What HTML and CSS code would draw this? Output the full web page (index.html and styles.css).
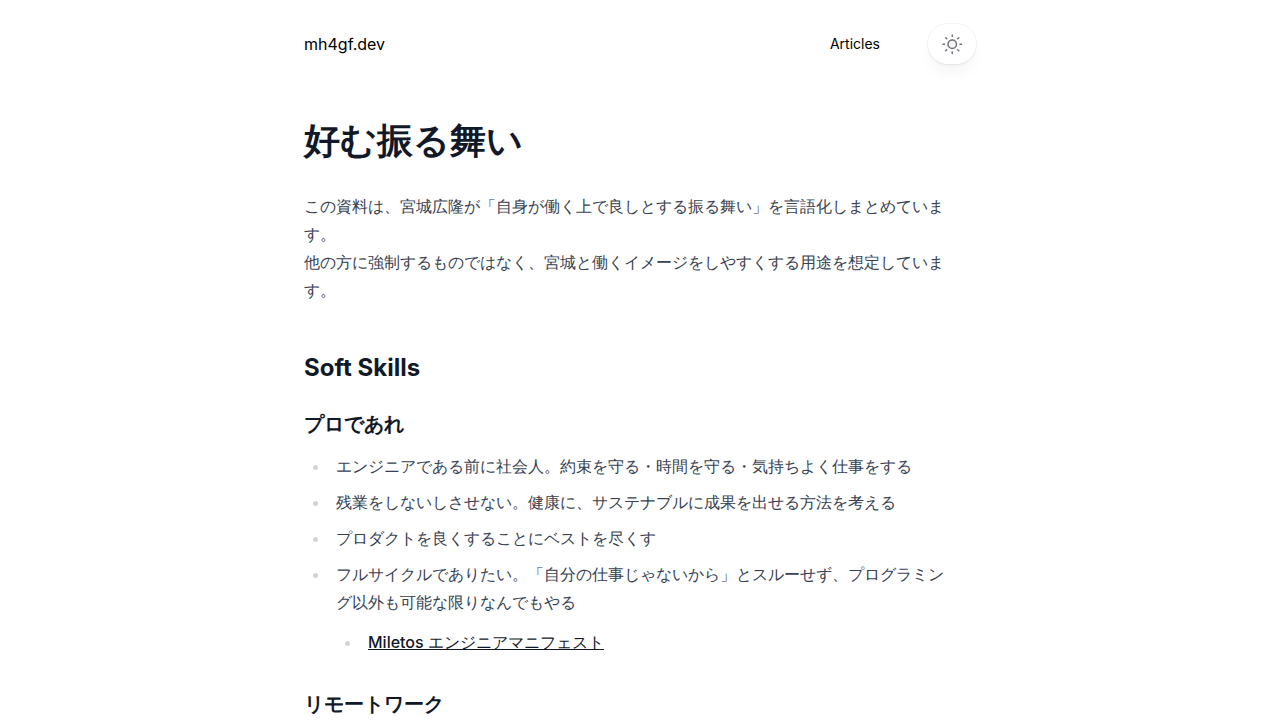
FILE: index.html
```html
<!DOCTYPE html>
<html lang="ja">
<head>
<meta charset="utf-8">
<meta name="viewport" content="width=device-width, initial-scale=1">
<title>好む振る舞い - mh4gf.dev</title>
<link rel="stylesheet" href="styles.css">
</head>
<body>
<div class="container">
  <header class="header">
    <a class="brand" href="#">mh4gf.dev</a>
    <nav class="nav">
      <a class="nav-link" href="#">Articles</a>
      <button class="theme-toggle" type="button" aria-label="Toggle dark mode">
        <svg class="icon" viewBox="0 0 24 24" fill="none" stroke="currentColor" stroke-width="1.5" stroke-linecap="round" stroke-linejoin="round" aria-hidden="true">
          <path class="icon-core" d="M8 12.25A4.25 4.25 0 0 1 12.25 8a4.25 4.25 0 0 1 4.25 4.25 4.25 4.25 0 0 1-4.25 4.25A4.25 4.25 0 0 1 8 12.25Z"/>
          <path d="M12.25 3v1.5M21.5 12.25H20M18.791 18.791l-1.06-1.06M18.791 5.709l-1.06 1.06M12.25 20v1.5M4.5 12.25H3M6.77 6.77 5.709 5.709M6.77 17.73l-1.061 1.061"/>
        </svg>
      </button>
    </nav>
  </header>
  <main>
    <article class="prose">
      <h1>好む振る舞い</h1>
      <p>この資料は、宮城広隆が「自身が働く上で良しとする振る舞い」を言語化しまとめています。<br>他の方に強制するものではなく、宮城と働くイメージをしやすくする用途を想定しています。</p>
      <h2>Soft Skills</h2>
      <h3>プロであれ</h3>
      <ul>
        <li>エンジニアである前に社会人。約束を守る・時間を守る・気持ちよく仕事をする</li>
        <li>残業をしないしさせない。健康に、サステナブルに成果を出せる方法を考える</li>
        <li>プロダクトを良くすることにベストを尽くす</li>
        <li>フルサイクルでありたい。「自分の仕事じゃないから」とスルーせず、プログラミング以外も可能な限りなんでもやる
          <ul>
            <li><a href="#">Miletos エンジニアマニフェスト</a></li>
          </ul>
        </li>
      </ul>
      <h3>リモートワーク</h3>
    </article>
  </main>
</div>
</body>
</html>
```

FILE: styles.css
```css
* {
  box-sizing: border-box;
}

body {
  margin: 0;
  background: #fff;
  color: #000;
  font-family: Inter, sans-serif;
  font-size: 16px;
  line-height: 24px;
  text-rendering: optimizeSpeed;
  text-spacing-trim: space-all;
}

.container {
  max-width: 672px;
  margin: 0 auto;
}

.header {
  display: flex;
  align-items: center;
  justify-content: space-between;
  padding: 24px 0;
}

.brand,
.nav-link {
  color: inherit;
  text-decoration: none;
}

.nav {
  display: flex;
  align-items: center;
  gap: 48px;
}

.nav-link {
  font-size: 14px;
  line-height: 20px;
}

.theme-toggle {
  display: flex;
  padding: 8px 12px;
  border: 0;
  border-radius: 20px;
  background: #fff;
  color: #71717a;
  box-shadow: 0 0 0 1px rgba(24, 24, 27, 0.05), 0 10px 15px -3px rgba(39, 39, 42, 0.05), 0 4px 6px -4px rgba(39, 39, 42, 0.05);
  cursor: pointer;
}

.icon {
  width: 24px;
  height: 24px;
}

.icon-core {
  fill: #f4f4f5;
}

.prose {
  max-width: 650px;
  padding: 32px 0 0;
  color: #374151;
  line-height: 28px;
}

.prose h1,
.prose h2,
.prose h3 {
  color: #111827;
}

.prose h1 {
  margin: 0 0 32px;
  font-size: 36px;
  font-weight: 800;
  line-height: 40px;
}

.prose h2 {
  margin: 48px 0 24px;
  font-size: 24px;
  font-weight: 700;
  line-height: 32px;
}

.prose h3 {
  margin: 32px 0 12px;
  font-size: 20px;
  font-weight: 600;
  line-height: 32px;
}

.prose h2 + h3,
.prose h3 + ul {
  margin-top: 0;
}

.prose p {
  margin: 20px 0;
}

.prose ul {
  margin: 20px 0;
  padding-left: 26px;
  list-style: disc;
}

.prose ul ul {
  margin: 12px 0;
}

.prose li {
  margin: 8px 0;
  padding-left: 6px;
}

.prose li::marker {
  color: #d1d5db;
}

.prose a {
  color: #111827;
  font-weight: 500;
}
```
